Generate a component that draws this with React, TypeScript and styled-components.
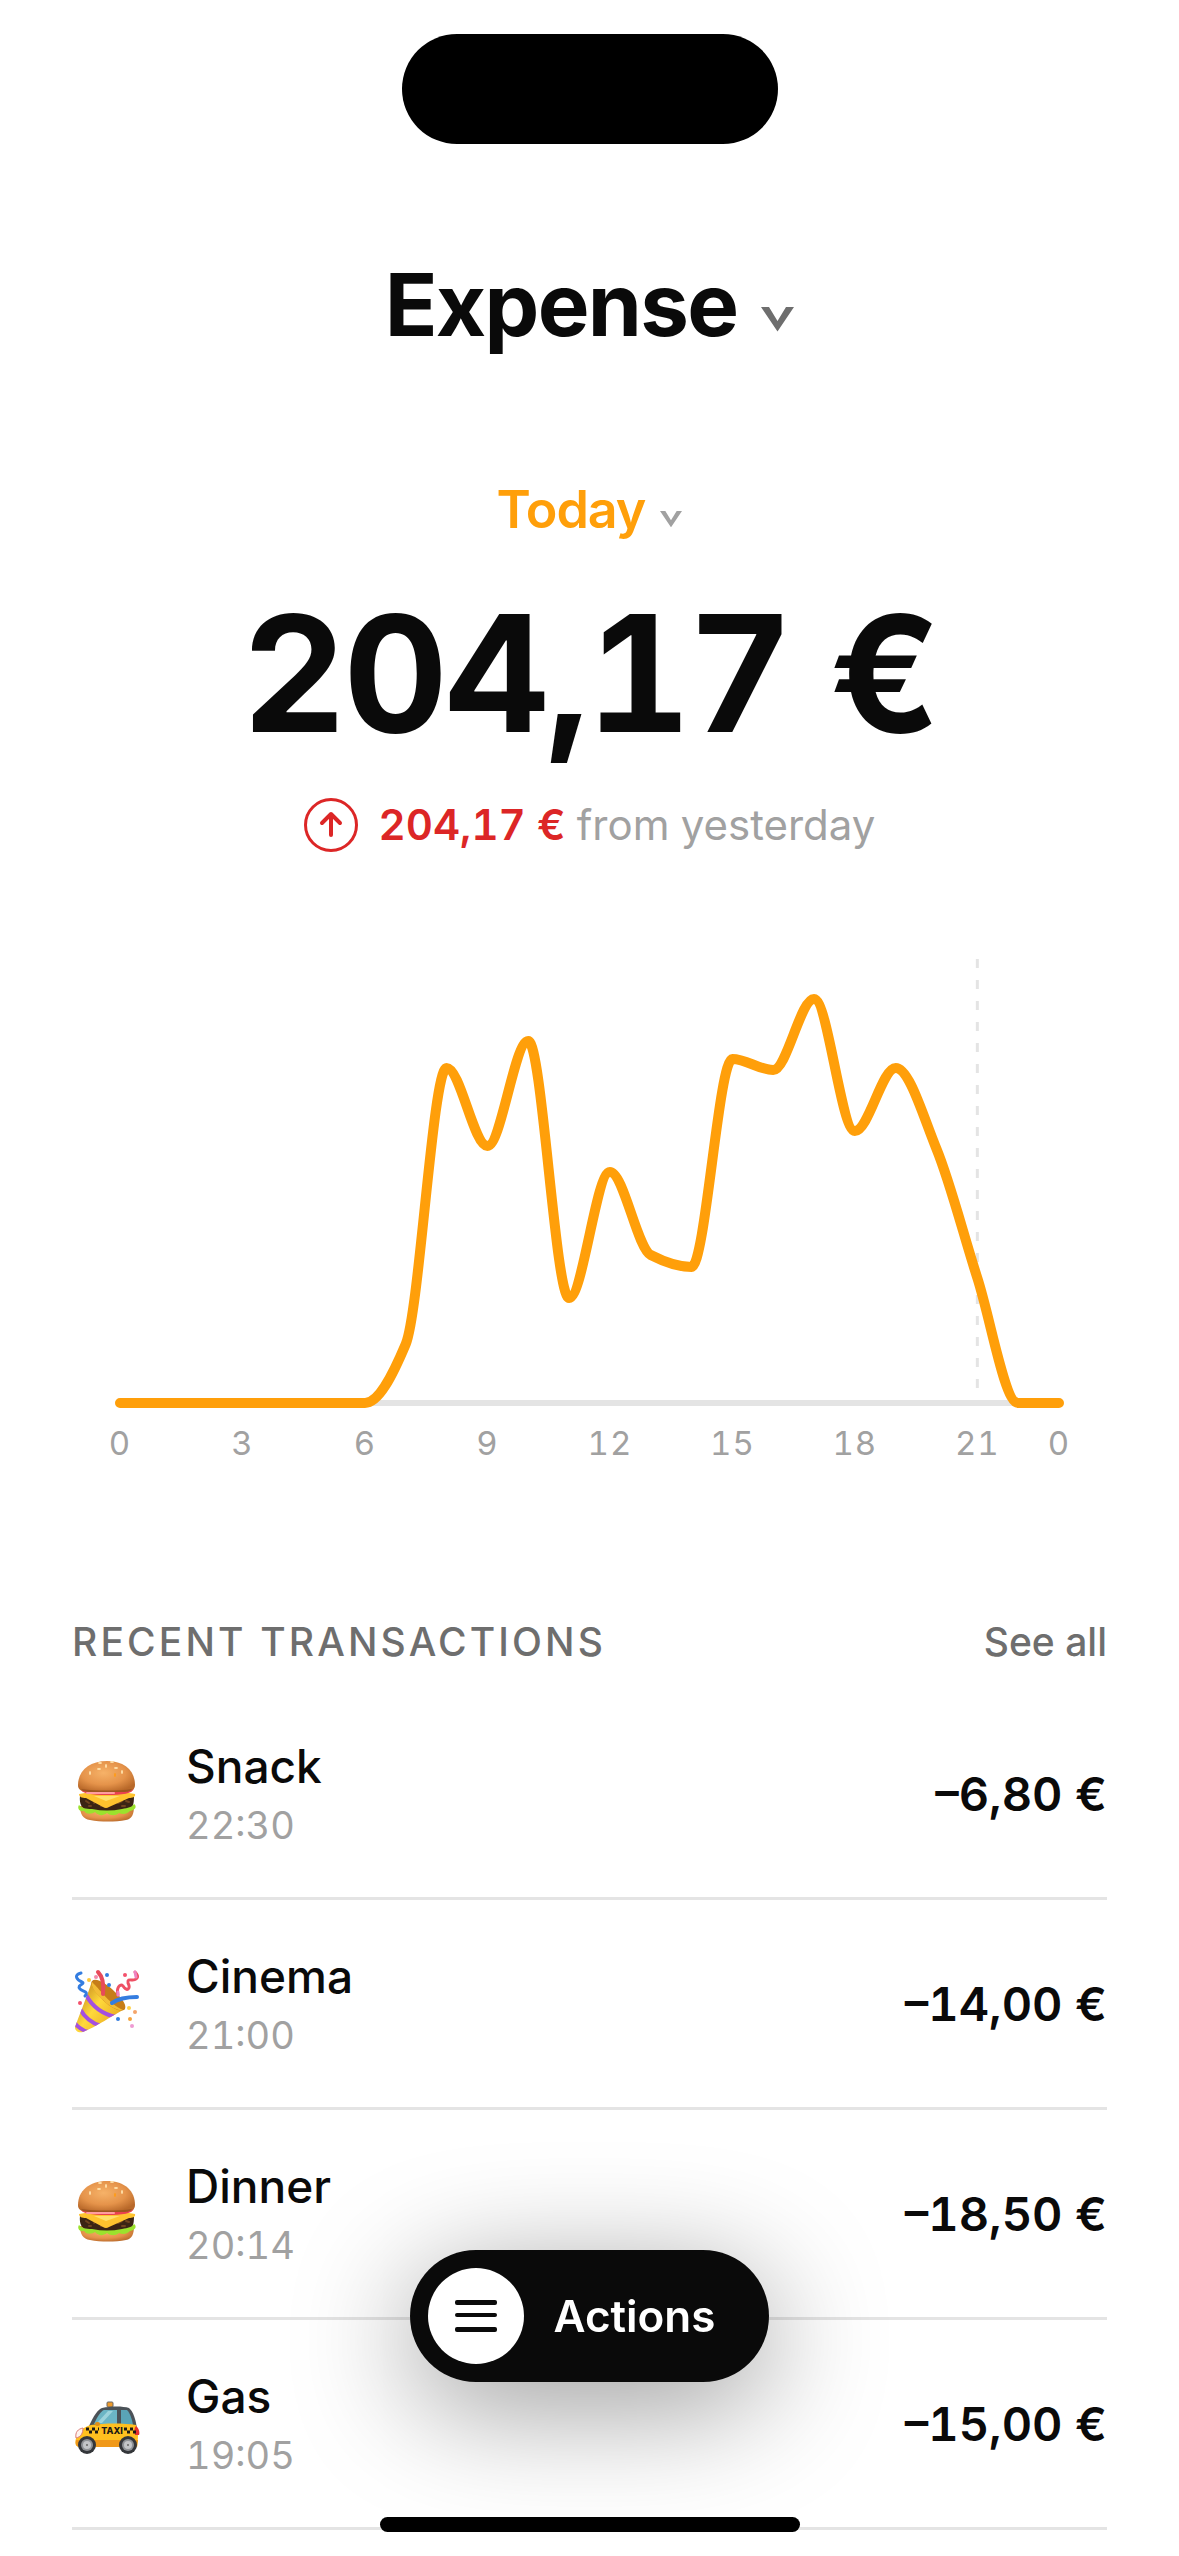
import React from "react";
import styled, { createGlobalStyle } from "styled-components";

const color = {
  ink: "#0a0a0a",
  soft: "#6e6e6e",
  faint: "#a1a1a1",
  line: "#e4e4e4",
  accent: "#ff9f0a",
  danger: "#dc2626",
};

const GlobalStyle = createGlobalStyle`
  *, *::before, *::after { box-sizing: border-box; }
  body {
    margin: 0;
    background: #fff;
    color: ${color.ink};
    font-family: Inter, "Liberation Sans", sans-serif;
    font-variant-numeric: tabular-nums;
  }
  button { font: inherit; letter-spacing: inherit; color: inherit; background: none; border: 0; padding: 0; cursor: pointer; }
  h1, h2, p, ul { margin: 0; padding: 0; }
`;

const Screen = styled.div`
  min-height: 100vh;
  display: flex;
  flex-direction: column;
`;

const StatusBar = styled.div`
  display: flex;
  justify-content: center;
  padding-top: 34px;
`;

const Island = styled.div`
  width: 376px;
  height: 110px;
  border-radius: 55px;
  background: #000;
`;

const Header = styled.header`
  display: flex;
  justify-content: center;
  padding-top: 108px;
`;

const Title = styled.h1`
  font-size: 87px;
  line-height: 105px;
  font-weight: 700;
  letter-spacing: -0.02em;
`;

const Picker = styled.button<{ $gap: number }>`
  display: flex;
  align-items: center;
  gap: ${(p) => p.$gap}px;
`;

const Chevron = styled.svg<{ $size: number; $tone: string }>`
  width: ${(p) => p.$size}px;
  height: auto;
  margin-top: 30px;
  fill: ${(p) => p.$tone};
`;

const SmallChevron = styled(Chevron)`
  margin-top: 18px;
`;

const Summary = styled.section`
  display: flex;
  flex-direction: column;
  align-items: center;
  padding-top: 120px;
`;

const Period = styled.span`
  font-size: 52px;
  line-height: 66px;
  font-weight: 600;
  letter-spacing: -0.02em;
  color: ${color.accent};
`;

const Total = styled.p`
  margin-top: 48px;
  font-size: 162px;
  line-height: 165px;
  font-weight: 700;
  letter-spacing: -0.02em;
`;

const Delta = styled.p`
  display: flex;
  align-items: center;
  gap: 21px;
  margin-top: 42px;
  font-size: 42px;
  line-height: 54px;
  color: ${color.faint};
`;

const DeltaIcon = styled.svg`
  width: 54px;
  height: 54px;
  fill: none;
  stroke: ${color.danger};
  stroke-linecap: round;
  stroke-linejoin: round;
`;

const DeltaValue = styled.strong`
  font-weight: 600;
  color: ${color.danger};
`;

const ChartArea = styled.figure`
  margin: 78px 72px 0;
`;

const ChartSvg = styled.svg`
  display: block;
  width: 100%;
  height: auto;
  overflow: visible;
`;

const AxisLabel = styled.text`
  font-size: 33px;
  letter-spacing: 0.03em;
  text-anchor: middle;
  fill: ${color.faint};
`;

const Recent = styled.section`
  padding: 148px 72px 0;
`;

const RecentHead = styled.div`
  display: flex;
  justify-content: space-between;
  align-items: center;
  font-size: 39px;
  line-height: 48px;
  color: ${color.soft};
`;

const RecentTitle = styled.h2`
  font-size: 39px;
  font-weight: 500;
  letter-spacing: 0.08em;
  text-transform: uppercase;
`;

const SeeAll = styled.a`
  font-weight: 500;
  color: inherit;
  text-decoration: none;
`;

const List = styled.ul`
  margin-top: 24px;
  list-style: none;
`;

const Row = styled.li`
  display: flex;
  align-items: center;
  padding: 45px 0;
  border-bottom: 3px solid ${color.line};
`;

const Emoji = styled.svg`
  width: 72px;
  height: 72px;
  margin-right: 42px;
  flex: none;
`;

const Details = styled.div`
  flex: 1;
  display: flex;
  flex-direction: column;
`;

const Name = styled.span`
  font-size: 46px;
  line-height: 63px;
  font-weight: 500;
`;

const Time = styled.time`
  font-size: 38px;
  line-height: 54px;
  color: ${color.faint};
`;

const Amount = styled.span`
  font-size: 47px;
  line-height: 60px;
  font-weight: 600;
`;

const Dock = styled.div`
  position: fixed;
  left: 0;
  right: 0;
  bottom: 24px;
  display: flex;
  flex-direction: column;
  align-items: center;
  gap: 135px;
  pointer-events: none;
`;

const ActionsButton = styled.button`
  && {
    display: flex;
    align-items: center;
    gap: 30px;
    padding: 18px 54px 18px 18px;
    border-radius: 66px;
    background: ${color.ink};
    color: #fff;
    font-size: 44px;
    line-height: 54px;
    font-weight: 600;
    box-shadow: 0 24px 120px rgba(0, 0, 0, 0.4);
    pointer-events: auto;
  }
`;

const MenuBadge = styled.span`
  display: grid;
  place-items: center;
  width: 96px;
  height: 96px;
  border-radius: 50%;
  background: #fff;
`;

const MenuIcon = styled.svg`
  width: 42px;
  height: 33px;
  fill: ${color.ink};
`;

const HomeIndicator = styled.div`
  width: 420px;
  height: 15px;
  border-radius: 8px;
  background: #000;
`;

const chevronPath = "M0 0H8L16.5 14L25 0H33L16.5 24.5Z";

/* Hourly spending as chart heights above the baseline */
const hourly = [
  0, 0, 0, 0, 0, 0, 0, 59, 335, 257, 362, 105, 231, 148, 136, 344, 333, 404,
  272, 335, 254, 125, 0, 0,
];
const chart = { width: 1035, height: 540, left: 48, right: 987, base: 473 };
const step = (chart.right - chart.left) / (hourly.length - 1);
const hourX = (hour: number) => chart.left + hour * step;

/* Monotone cubic interpolation: the curve never overshoots a data point */
function curve(values: number[]) {
  const y = values.map((v) => chart.base - v);
  const tangent = y.map((_, i) => {
    if (i === 0 || i === y.length - 1) return 0;
    const a = (y[i] - y[i - 1]) / step;
    const b = (y[i + 1] - y[i]) / step;
    return a * b <= 0 ? 0 : (2 * a * b) / (a + b);
  });
  const h = step / 3;
  return y
    .map((v, i) =>
      i === 0
        ? `M${hourX(0)} ${v}`
        : `C${hourX(i - 1) + h} ${y[i - 1] + tangent[i - 1] * h} ${
            hourX(i) - h
          } ${v - tangent[i] * h} ${hourX(i)} ${v}`
    )
    .join("");
}

const ticks = [
  { hour: 0, label: "0" },
  { hour: 3, label: "3" },
  { hour: 6, label: "6" },
  { hour: 9, label: "9" },
  { hour: 12, label: "12" },
  { hour: 15, label: "15" },
  { hour: 18, label: "18" },
  { hour: 21, label: "21" },
  { hour: 23, label: "0" },
];

function SpendingChart() {
  return (
    <ChartArea>
      <ChartSvg
        viewBox={`0 0 ${chart.width} ${chart.height}`}
        role="img"
        aria-label="Spending by hour"
      >
        <line
          x1={hourX(21)}
          x2={hourX(21)}
          y1="29"
          y2="458"
          stroke={color.line}
          strokeWidth="3"
          strokeDasharray="9 12"
        />
        <line
          x1={chart.left}
          x2={chart.right}
          y1={chart.base}
          y2={chart.base}
          stroke={color.line}
          strokeWidth="6"
        />
        <path
          d={curve(hourly)}
          fill="none"
          stroke={color.accent}
          strokeWidth="10"
          strokeLinecap="round"
          strokeLinejoin="round"
        />
        {ticks.map((t) => (
          <AxisLabel key={t.hour} x={hourX(t.hour)} y="525">
            {t.label}
          </AxisLabel>
        ))}
      </ChartSvg>
    </ChartArea>
  );
}

function Burger() {
  return (
    <Emoji viewBox="0 4 72 72" aria-hidden="true">
      <defs>
        <radialGradient id="bun" cx="0.45" cy="0.4" r="0.65">
          <stop offset="0" stopColor="#f6b268" />
          <stop offset="0.6" stopColor="#e5934a" />
          <stop offset="1" stopColor="#b9692a" />
        </radialGradient>
      </defs>
      <path d="M8 52C8 60 11 65 18 66C29 68 43 68 54 66C60 65 62 60 62 52Z" fill="url(#bun)" />
      <path d="M8 42C7 50 10 55 16 56C28 58 44 58 55 56C61 55 62 50 62 42Z" fill="#3b2414" />
      <path d="M14 47l3 2M22 49l3-2M46 49l4-2M54 47l3 1M29 52l3-1M17 52l2 0M50 52l3 0" stroke="#6e431f" strokeWidth="2" strokeLinecap="round" />
      <path d="M7 51C5 54 7 58 12 57C15 61 20 60 23 58C27 62 31 62 35 59C39 62 43 62 47 59C51 61 55 60 58 57C64 56 65 52 62 50C60 53 56 54 50 55C40 57 30 57 20 55C13 55 10 54 7 51Z" fill="#9be22d" />
      <path d="M7 40C22 37 48 37 63 40C64 43 60 44 57 44L37 53Q34 55 31 53L14 44C10 44 7 43 7 40Z" fill="#ffc32e" />
      <path d="M22 42L34 47L48 42" fill="#ffe06a" />
      <path d="M8 34C9 40 20 41 35 41C50 41 61 40 62 34Z" fill="#e8414f" />
      <path d="M15 39H42" stroke="#ff9c9f" strokeWidth="2" strokeLinecap="round" />
      <path d="M6 31C6 17 17 7 35 7C53 7 63 17 63 31C63 36 59 37 54 37H15C9 37 6 36 6 31Z" fill="url(#bun)" />
      <path d="M9 35C24 37 46 37 60 35C58 38 54 38 50 38H18C13 38 10 37 9 35Z" fill="#9c5520" />
      <g fill="#ffe1aa">
        <ellipse cx="28" cy="9" rx="2" ry="1" />
        <ellipse cx="40" cy="8" rx="2" ry="1" />
        <ellipse cx="27" cy="15" rx="2" ry="1" />
        <ellipse cx="34" cy="12" rx="1" ry="2" />
        <ellipse cx="44" cy="14" rx="2" ry="1" />
        <ellipse cx="50" cy="18" rx="1" ry="2" />
        <ellipse cx="18" cy="19" rx="1" ry="2" />
      </g>
      <ellipse cx="43" cy="21" rx="1" ry="2" fill="#ff9b16" />
    </Emoji>
  );
}

function PartyPopper() {
  return (
    <Emoji viewBox="0 4 72 72" aria-hidden="true">
      <defs>
        <linearGradient id="cone" x1="0" y1="0.3" x2="0.8" y2="0.9">
          <stop offset="0" stopColor="#c78a1e" />
          <stop offset="0.45" stopColor="#ffd93b" />
          <stop offset="1" stopColor="#e9a820" />
        </linearGradient>
        <clipPath id="coneClip">
          <path d="M20 17C16 30 7 52 3 63C3 67 6 69 11 68C24 63 41 51 53 45Z" />
        </clipPath>
      </defs>
      <path d="M20 17C16 30 7 52 3 63C3 67 6 69 11 68C24 63 41 51 53 45Z" fill="url(#cone)" />
      <g clipPath="url(#coneClip)" stroke="#a44fe0" strokeWidth="4" fill="none">
        <path d="M14 31C20 42 30 50 44 53" />
        <path d="M8 45C13 54 19 59 29 62" />
        <path d="M2 58C6 64 10 66 16 68" />
      </g>
      <path d="M20 17C24 13 35 20 43 28C51 35 56 43 52 46C46 48 36 42 29 34C22 27 18 21 20 17Z" fill="#c67d18" />
      <path d="M20 18C18 22 25 31 31 36C38 43 46 47 51 46C44 43 37 37 31 30C26 24 22 20 20 18Z" fill="#f2bd36" />
      <g fill="none" strokeLinecap="round">
        <path d="M31 30C32 21 31 13 26 8" stroke="#e84a5a" strokeWidth="4" />
        <path d="M40 39C47 34 56 33 65 33" stroke="#347de0" strokeWidth="4" />
        <path d="M9 9C1 11 5 16 10 18C14 20 4 21 8 25C11 28 17 27 13 32" stroke="#347de0" strokeWidth="3" />
        <path d="M46 31C44 24 48 19 51 22C55 28 59 25 56 19C55 13 61 18 64 15C67 13 65 10 63 8" stroke="#ee5064" strokeWidth="3" />
        <path d="M46 31L46 28M64 13L63 8" stroke="#ee83c0" strokeWidth="3" />
      </g>
      <g fill="#347de0">
        <circle cx="35" cy="11" r="2" />
        <circle cx="37" cy="21" r="2" />
        <circle cx="46" cy="55" r="2" />
      </g>
      <g fill="#f4516c">
        <circle cx="53" cy="11" r="2" />
        <circle cx="8" cy="39" r="2" />
      </g>
      <circle cx="17" cy="16" r="2" fill="#ffc93a" />
      <circle cx="57" cy="44" r="2" fill="#ffd24a" />
      <circle cx="24" cy="13" r="2" fill="#f48aa8" />
      <circle cx="63" cy="48" r="2" fill="#f4a46a" />
      <circle cx="58" cy="55" r="2" fill="#f5a33c" />
      <circle cx="60" cy="62" r="2" fill="#ee9bd2" />
    </Emoji>
  );
}

function Taxi() {
  return (
    <Emoji viewBox="0 2 72 72" aria-hidden="true">
      <rect x="35" y="16" width="6" height="5" rx="1" fill="#ee9a2a" stroke="#666" strokeWidth="1" />
      <path d="M17 40C21 31 26 23 30 22C39 20 51 20 57 22C61 25 64 34 65 43Z" fill="#4b5258" />
      <path d="M22 38C25 31 29 25 32 24H45V38Z" fill="#6bb5c5" />
      <path d="M49 24H55C58 27 60 33 61 39L49 38Z" fill="#5aa4b7" />
      <path d="M25 37L36 25H41L30 37Z" fill="#9cd3dc" />
      <path d="M19 39C33 37 52 37 64 39C67 46 66 54 65 61H8C3 61 3 57 4 52C5 45 12 41 19 39Z" fill="#ffc01f" />
      <path d="M4 54H66L65 61H8C4 61 3 58 4 54Z" fill="#f0991a" />
      <path d="M4 52C3 46 6 43 11 42C11 47 9 51 4 52Z" fill="#fff2ec" stroke="#db7c77" strokeWidth="1" />
      <path d="M64 40C67 42 68 47 67 49H63C62 46 62 42 64 40Z" fill="#e6322f" />
      <g stroke="#1d1a14" strokeWidth="3" strokeDasharray="3 3">
        <path d="M14 43H27M52 43H64" />
        <path d="M17 46H27M55 46H64" />
      </g>
      <text x="40" y="48" textAnchor="middle" fontSize="9" fontWeight="800" fill="#1d1a14">
        TAXI
      </text>
      <rect x="23" y="36" width="5" height="4" rx="2" fill="#e08d18" />
      {[15, 56].map((cx) => (
        <g key={cx}>
          <circle cx={cx} cy="59" r="9" fill="#34363a" />
          <circle cx={cx} cy="59" r="6" fill="#8f9296" />
          <circle cx={cx} cy="59" r="4" fill="#c3c5c8" />
          <circle cx={cx} cy="59" r="1" fill="#666" />
        </g>
      ))}
    </Emoji>
  );
}

const transactions = [
  { name: "Snack", time: "22:30", amount: "–6,80 €", Icon: Burger },
  { name: "Cinema", time: "21:00", amount: "–14,00 €", Icon: PartyPopper },
  { name: "Dinner", time: "20:14", amount: "–18,50 €", Icon: Burger },
  { name: "Gas", time: "19:05", amount: "–15,00 €", Icon: Taxi },
];

export default function App() {
  return (
    <Screen>
      <GlobalStyle />
      <StatusBar>
        <Island />
      </StatusBar>
      <Header>
        <Title>
          <Picker $gap={24} aria-haspopup="listbox">
            Expense
            <Chevron $size={33} $tone={color.soft} viewBox="0 0 33 25" aria-hidden="true">
              <path d={chevronPath} />
            </Chevron>
          </Picker>
        </Title>
      </Header>
      <main>
        <Summary>
          <Picker $gap={15} aria-haspopup="listbox">
            <Period>Today</Period>
            <SmallChevron $size={22} $tone={color.faint} viewBox="0 0 33 25" aria-hidden="true">
              <path d={chevronPath} />
            </SmallChevron>
          </Picker>
          <Total>204,17 €</Total>
          <Delta>
            <DeltaIcon viewBox="0 0 54 54" aria-hidden="true">
              <circle cx="27" cy="27" r="25.5" strokeWidth="3" />
              <path d="M27 37V16M18 25L27 16L36 25" strokeWidth="4" />
            </DeltaIcon>
            <span>
              <DeltaValue>204,17 €</DeltaValue> from yesterday
            </span>
          </Delta>
        </Summary>
        <SpendingChart />
        <Recent>
          <RecentHead>
            <RecentTitle>Recent transactions</RecentTitle>
            <SeeAll href="#all">See all</SeeAll>
          </RecentHead>
          <List>
            {transactions.map(({ name, time, amount, Icon }) => (
              <Row key={time}>
                <Icon />
                <Details>
                  <Name>{name}</Name>
                  <Time>{time}</Time>
                </Details>
                <Amount>{amount}</Amount>
              </Row>
            ))}
          </List>
        </Recent>
      </main>
      <Dock>
        <ActionsButton>
          <MenuBadge>
            <MenuIcon viewBox="0 0 42 33" aria-hidden="true">
              <rect width="42" height="5" rx="2" />
              <rect y="13" width="42" height="4" rx="2" />
              <rect y="27" width="42" height="5" rx="2" />
            </MenuIcon>
          </MenuBadge>
          Actions
        </ActionsButton>
        <HomeIndicator />
      </Dock>
    </Screen>
  );
}
